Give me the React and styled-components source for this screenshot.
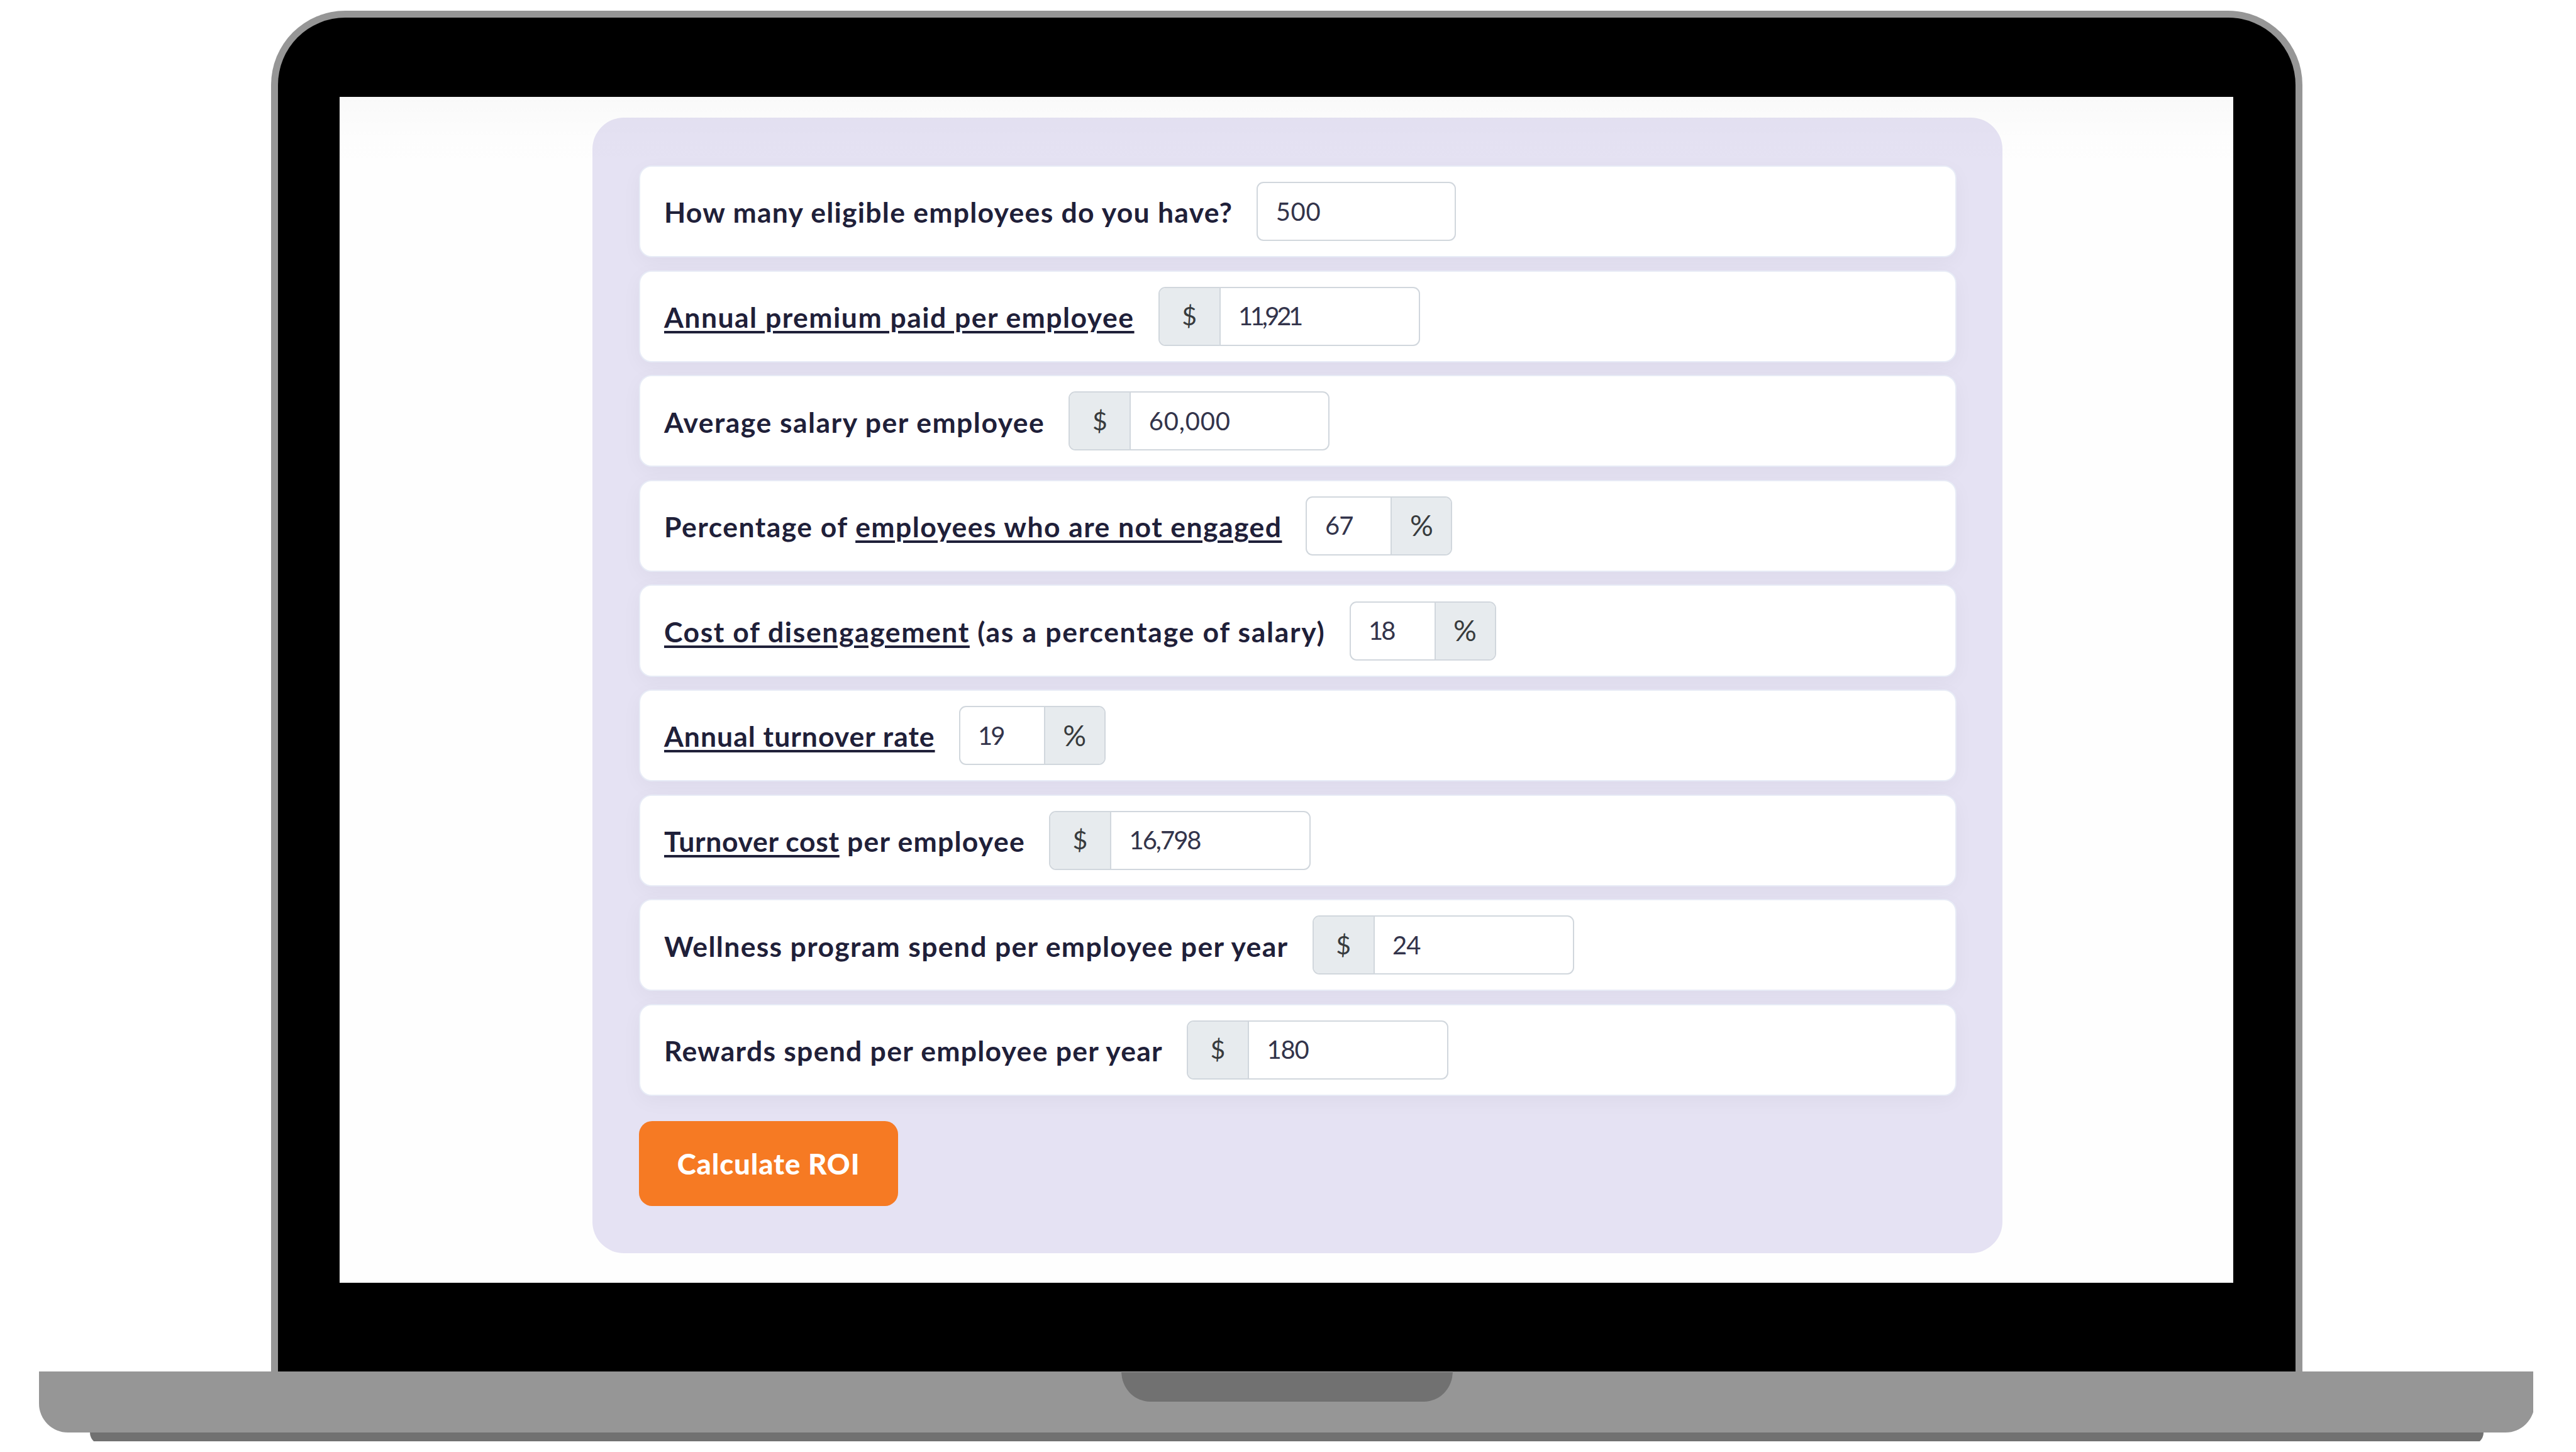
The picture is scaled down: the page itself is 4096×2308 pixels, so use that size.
import React from "react";
import styled, { createGlobalStyle } from "styled-components";

const GlobalStyle = createGlobalStyle`
  *, *::before, *::after { box-sizing: border-box; }
  body {
    margin: 0;
    background: #fff;
    font-family: Lato, "Open Sans", sans-serif;
    overflow: hidden;
  }
`;

const Stage = styled.main`
  display: flex;
  flex-direction: column;
  align-items: flex-start;
  width: 4096px;
  height: 2308px;
  padding-top: 17px;
  background: #fff;
`;

const Lid = styled.div`
  width: 3230px;
  height: 2163px;
  margin-left: 431px;
  padding: 126px 99px 0 98px;
  background: #000;
  border: 11px solid #969696;
  border-bottom: 0;
  border-radius: 118px 118px 0 0;
`;

const Screen = styled.div`
  position: relative;
  display: flex;
  flex-direction: column;
  height: 1885px;
  padding: 33px 367px 0 402px;
  background: #fefefe;

  &::after {
    content: "";
    position: absolute;
    inset: 0 0 auto 0;
    height: 126px;
    background: linear-gradient(
      rgba(0, 0, 0, 0.02),
      rgba(0, 0, 0, 0.01) 32px,
      rgba(0, 0, 0, 0.004) 70px,
      transparent
    );
  }
`;

const Panel = styled.form`
  display: flex;
  flex-direction: column;
  align-items: flex-start;
  height: 1805px;
  margin: 0;
  padding: 76px 73px 0 74px;
  background: #e5e2f3;
  border-radius: 50px;
`;

const Rows = styled.div`
  display: flex;
  flex-direction: column;
  align-self: stretch;
  gap: 20.3px;
`;

const Row = styled.div`
  display: flex;
  align-items: center;
  gap: 38px;
  height: 146.3px;
  padding-left: 38px;
  background: #fff;
  border: 2px solid #e7ebf6;
  border-radius: 20px;
  box-shadow: 0 8px 32px rgba(0, 0, 0, 0.04);
`;

const Label = styled.label`
  padding-top: 2px;
  color: #1f2039;
  font-size: 44.5px;
  font-weight: 700;
  line-height: 1.2;
  white-space: pre;
`;

const LabelPart = styled.span`
  letter-spacing: ${(p) => p.$tracking}px;
  text-decoration: ${(p) => (p.$linked ? "underline" : "none")};
  text-decoration-thickness: 4px;
  text-underline-offset: 4.5px;
`;

const Group = styled.div`
  display: flex;
  height: 94px;
  width: ${(p) => p.$width}px;
  border: 2px solid #d1d7dd;
  border-radius: 11px;
  overflow: hidden;
  background: #fff;
`;

const Addon = styled.span`
  display: flex;
  align-items: center;
  justify-content: center;
  width: ${(p) => (p.$side === "left" ? 97 : 96)}px;
  padding-bottom: 2px;
  background: #e7ebee;
  border-${(p) => (p.$side === "left" ? "right" : "left")}: 2px solid #d1d7dd;
  color: #383b3d;
  font-size: ${(p) => (p.$side === "left" ? 41 : 46)}px;
`;

const Value = styled.span`
  display: flex;
  flex: 1;
  align-items: center;
  padding: 0 0 1px 28.5px;
  color: #33344b;
  font-size: 40px;
  letter-spacing: ${(p) => p.$tracking}px;
`;

const Submit = styled.button`
  width: 412px;
  height: 135px;
  margin: 40px 0 0;
  padding: 0;
  background: #f67a23;
  border: 0;
  border-radius: 21px;
  color: #fff;
  font-family: inherit;
  font-size: 45.5px;
  font-weight: 900;
  letter-spacing: 0.9px;
`;

const Base = styled.div`
  display: flex;
  justify-content: center;
  width: 3968px;
  height: 97px;
  margin-left: 62px;
  background: #969696;
  border-radius: 0 0 46px 46px;
  clip-path: inset(0 2px 0 0);
`;

const Notch = styled.div`
  width: 527px;
  height: 48px;
  background: #717171;
  border-radius: 0 0 46px 46px / 0 0 48px 48px;
  box-shadow: inset 0 1px #a8a8a8;
`;

const FootClip = styled.div`
  width: 3806px;
  height: 14px;
  margin-left: 143px;
  overflow: hidden;
`;

const Foot = styled.div`
  height: 19px;
  background: #717171;
  border-radius: 0 0 19px 19px;
`;

const fields = [
  {
    label: [{ text: "How many eligible employees do you have?", tracking: 1.25 }],
    value: "500",
    width: 317,
    tracking: 0.6,
  },
  {
    label: [{ text: "Annual premium paid per employee", tracking: 1.47, linked: true }],
    prefix: "$",
    value: "11,921",
    width: 416,
    tracking: -4.4,
  },
  {
    label: [{ text: "Average salary per employee", tracking: 1.47 }],
    prefix: "$",
    value: "60,000",
    width: 415,
    tracking: 0.8,
  },
  {
    label: [
      { text: "Percentage of ", tracking: 1.47 },
      { text: "employees who are not engaged", tracking: 1.43, linked: true },
    ],
    suffix: "%",
    value: "67",
    width: 233,
    tracking: -1,
  },
  {
    label: [
      { text: "Cost of disengagement", tracking: 1.58, linked: true },
      { text: " (as a percentage of salary)", tracking: 1.7 },
    ],
    suffix: "%",
    value: "18",
    width: 233,
    tracking: -3,
  },
  {
    label: [{ text: "Annual turnover rate", tracking: 1, linked: true }],
    suffix: "%",
    value: "19",
    width: 233,
    tracking: -3,
  },
  {
    label: [
      { text: "Turnover cost", tracking: 0.68, linked: true },
      { text: " per employee", tracking: 1.26 },
    ],
    prefix: "$",
    value: "16,798",
    width: 416,
    tracking: -2,
  },
  {
    label: [{ text: "Wellness program spend per employee per year", tracking: 1.32 }],
    prefix: "$",
    value: "24",
    width: 416,
    tracking: -1,
  },
  {
    label: [{ text: "Rewards spend per employee per year", tracking: 1.26 }],
    prefix: "$",
    value: "180",
    width: 416,
    tracking: -1.2,
  },
];

function Field({ label, prefix, suffix, value, width, tracking }) {
  return (
    <Row>
      <Label>
        {label.map((part) => (
          <LabelPart key={part.text} $tracking={part.tracking} $linked={part.linked}>
            {part.text}
          </LabelPart>
        ))}
      </Label>
      <Group $width={width}>
        {prefix && <Addon $side="left">{prefix}</Addon>}
        <Value $tracking={tracking}>{value}</Value>
        {suffix && <Addon $side="right">{suffix}</Addon>}
      </Group>
    </Row>
  );
}

export default function App() {
  return (
    <>
      <GlobalStyle />
      <Stage>
        <Lid>
          <Screen>
            <Panel>
              <Rows>
                {fields.map((field) => (
                  <Field key={field.label[0].text} {...field} />
                ))}
              </Rows>
              <Submit type="button">Calculate ROI</Submit>
            </Panel>
          </Screen>
        </Lid>
        <Base>
          <Notch />
        </Base>
        <FootClip>
          <Foot />
        </FootClip>
      </Stage>
    </>
  );
}
